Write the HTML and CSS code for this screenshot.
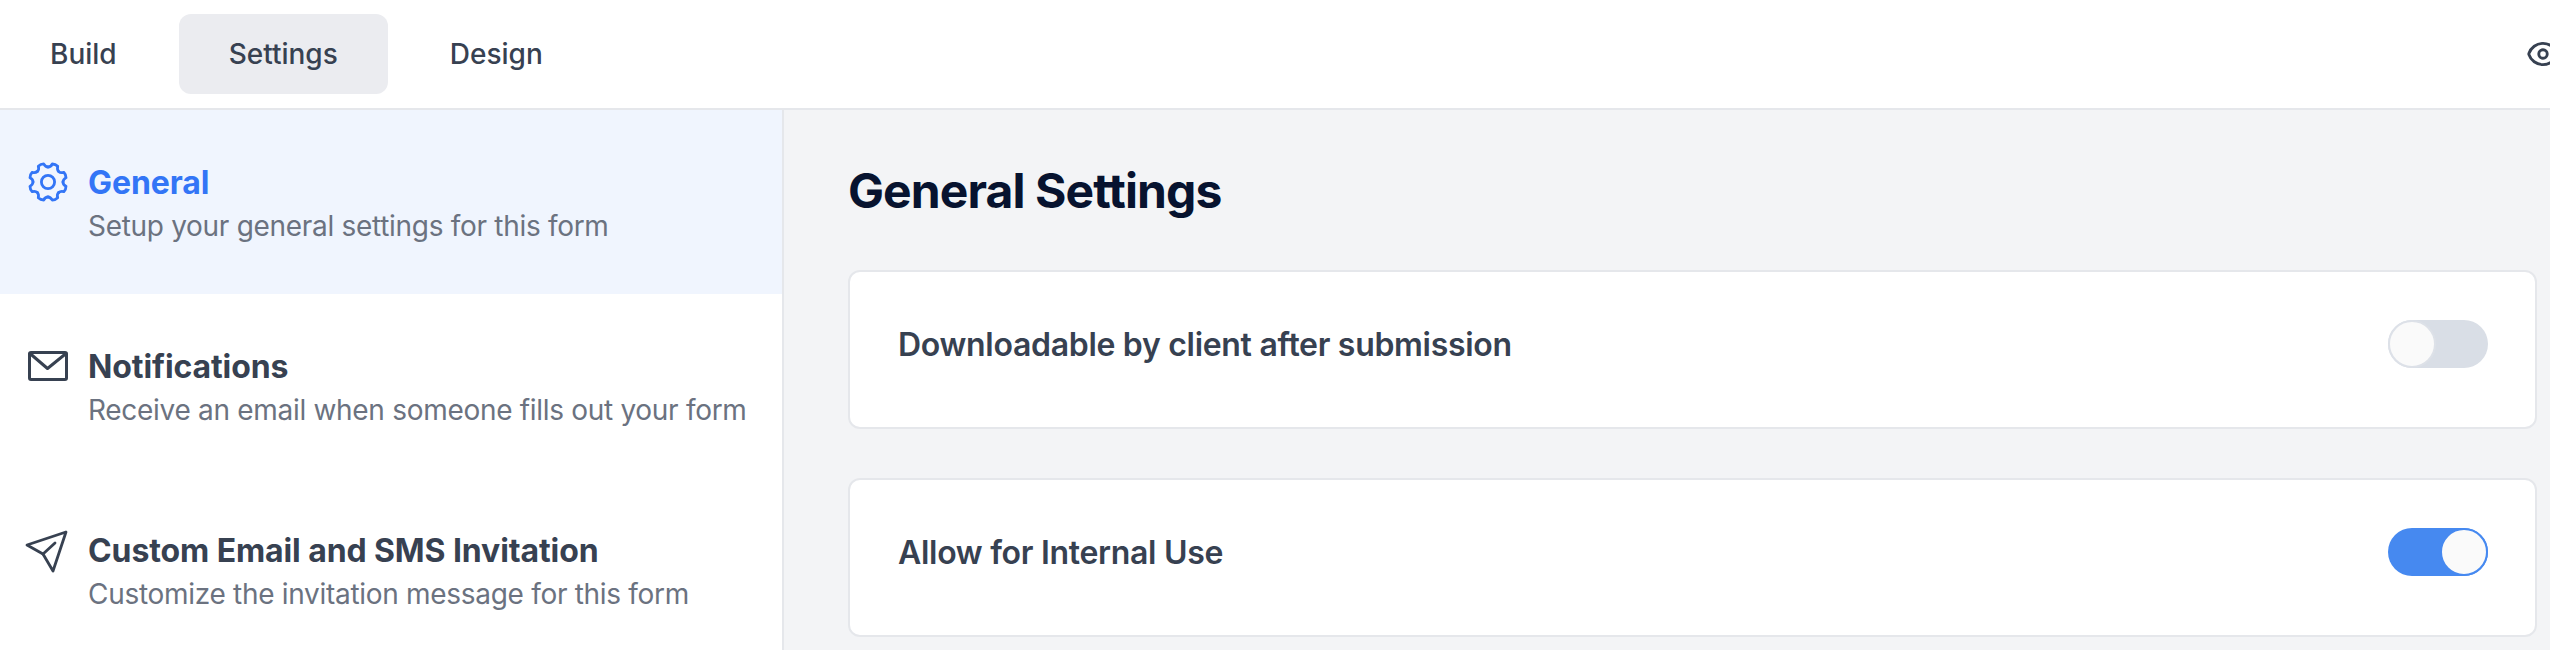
FILE: index.html
```html
<!DOCTYPE html>
<html lang="en">
<head>
    <meta charset="UTF-8">
    <title>General Settings</title>
    <link rel="stylesheet" href="styles.css">
</head>
<body>
<div class="topbar">
    <a class="tab" href="#">Build</a>
    <a class="tab active" href="#">Settings</a>
    <a class="tab" href="#">Design</a>
    <svg class="eye" viewBox="0 0 24 24" fill="none" stroke="#374151" stroke-width="2" stroke-linecap="round" stroke-linejoin="round">
        <path d="M2.036 12.322a1.012 1.012 0 0 1 0-.639C3.423 7.51 7.36 4.5 12 4.5c4.638 0 8.573 3.007 9.963 7.178.07.207.07.431 0 .639C20.577 16.49 16.64 19.5 12 19.5c-4.638 0-8.573-3.007-9.964-7.178Z"/>
        <path d="M15 12a3 3 0 1 1-6 0 3 3 0 0 1 6 0Z"/>
    </svg>
</div>
<div class="content">
    <ul class="sidebar">
        <li class="item active">
            <svg class="icon" viewBox="0 0 40 40" fill="none" stroke="currentColor" stroke-width="2.8" stroke-linecap="round" stroke-linejoin="round">
                <defs>
                    <path id="tooth" d="M20 5C21.8 5 23.3 4 24.3 2C27 2 28.5 3 29.7 4.2C29.2 6.4 29.5 8.2 30.6 9.4"/>
                </defs>
                <use href="#tooth"/>
                <use href="#tooth" transform="rotate(45 20 20)"/>
                <use href="#tooth" transform="rotate(90 20 20)"/>
                <use href="#tooth" transform="rotate(135 20 20)"/>
                <use href="#tooth" transform="rotate(180 20 20)"/>
                <use href="#tooth" transform="rotate(225 20 20)"/>
                <use href="#tooth" transform="rotate(270 20 20)"/>
                <use href="#tooth" transform="rotate(315 20 20)"/>
                <circle cx="20" cy="20" r="6.6"/>
            </svg>
            <div>
                <div class="item-title">General</div>
                <div class="item-sub">Setup your general settings for this form</div>
            </div>
        </li>
        <li class="item">
            <svg class="icon" viewBox="0 0 40 40" fill="none" stroke="currentColor" stroke-width="3" stroke-linecap="round" stroke-linejoin="round">
                <rect x="1.5" y="6.5" width="37" height="27" rx="1.5"/>
                <path d="M2 7.5L19.5 22.5L38 7.5"/>
            </svg>
            <div>
                <div class="item-title">Notifications</div>
                <div class="item-sub">Receive an email when someone fills out your form</div>
            </div>
        </li>
        <li class="item">
            <svg class="icon" viewBox="0 0 40 40" fill="none" stroke="currentColor" stroke-width="2.8" stroke-linecap="round" stroke-linejoin="round">
                <path d="M38 2L-1 15L15 24L25 41Z"/>
                <path d="M15 24L27 13"/>
            </svg>
            <div>
                <div class="item-title">Custom Email and SMS Invitation</div>
                <div class="item-sub">Customize the invitation message for this form</div>
            </div>
        </li>
    </ul>
    <div class="main">
        <h1>General Settings</h1>
        <div class="card">
            <span>Downloadable by client after submission</span>
            <div class="toggle"><i></i></div>
        </div>
        <div class="card">
            <span>Allow for Internal Use</span>
            <div class="toggle on"><i></i></div>
        </div>
    </div>
</div>
</body>
</html>
```

FILE: styles.css
```css
* {
    margin: 0;
    padding: 0;
    box-sizing: border-box;
}

html, body {
    height: 650px;
    overflow: hidden;
}

body {
    background: #fff;
    font-family: Inter, "Liberation Sans", sans-serif;
    color: #374151;
}

.topbar {
    display: flex;
    align-items: center;
    gap: 12px;
    height: 110px;
    padding: 14px 0;
    border-bottom: 2px solid #e5e7eb;
}

.tab {
    display: block;
    height: 80px;
    line-height: 80px;
    padding: 0 50px;
    border-radius: 12px;
    font-size: 28px;
    font-weight: 500;
    color: #374151;
    text-decoration: none;
}

.tab.active {
    background: #ebecf0;
}

.eye {
    width: 34px;
    height: 34px;
    margin-left: auto;
    margin-right: -10px;
    flex-shrink: 0;
}

.content {
    display: flex;
    height: 540px;
}

.sidebar {
    width: 784px;
    flex-shrink: 0;
    list-style: none;
    border-right: 2px solid #e5e7eb;
}

.item {
    display: flex;
    gap: 20px;
    height: 184px;
    padding: 52px 0 0 28px;
    color: #374151;
}

.item.active {
    background: #f0f5fe;
    color: #3375f6;
}

.icon {
    width: 40px;
    height: 40px;
    flex-shrink: 0;
    overflow: visible;
}

.item-title {
    font-size: 32px;
    font-weight: 700;
    line-height: 42px;
    letter-spacing: -0.1px;
}

.item-sub {
    margin-top: 2px;
    font-size: 28px;
    line-height: 40px;
    letter-spacing: -0.3px;
    color: #6b7280;
}

.main {
    flex: 1;
    padding: 49px 13px 0 64px;
    background: #f3f4f6;
}

h1 {
    font-size: 48px;
    font-weight: 700;
    line-height: 64px;
    letter-spacing: -0.9px;
    color: #07132f;
    margin-bottom: 47px;
}

.card {
    display: flex;
    align-items: center;
    justify-content: space-between;
    height: 159px;
    margin-bottom: 49px;
    padding: 48px 47px 59px 48px;
    background: #fff;
    border: 2px solid #e5e7eb;
    border-radius: 12px;
    font-size: 32px;
    font-weight: 600;
    letter-spacing: -0.3px;
    color: #374151;
}

.toggle {
    display: flex;
    width: 100px;
    height: 48px;
    border-radius: 24px;
    background: #d9dee6;
}

.toggle i {
    display: block;
    width: 48px;
    height: 48px;
    border-radius: 50%;
    background: #fafafa;
    border: 2px solid #dde1e8;
}

.toggle.on {
    justify-content: flex-end;
    background: #4689f0;
}

.toggle.on i {
    border-color: #4689f0;
}
```
